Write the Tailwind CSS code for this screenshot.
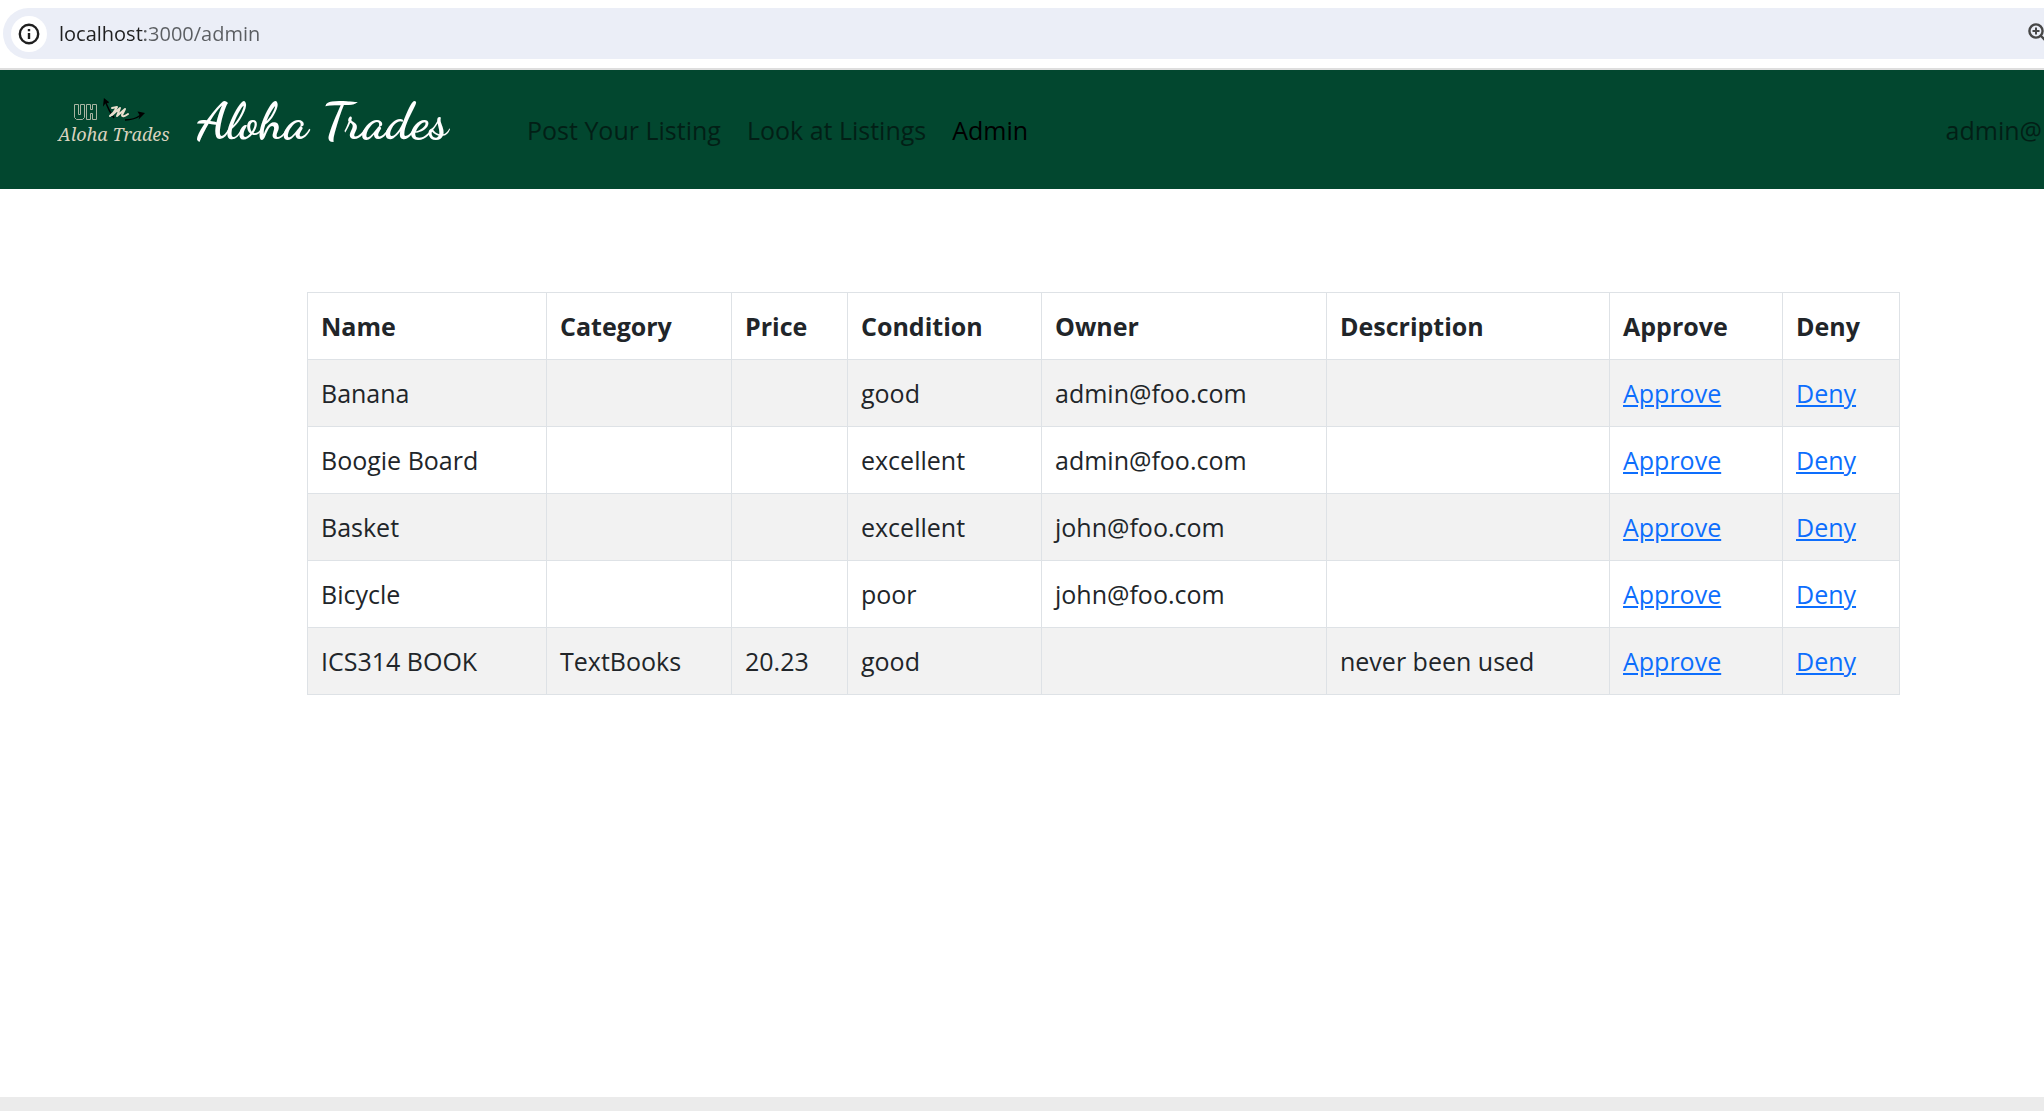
<!DOCTYPE html>
<html lang="en">
<head>
<meta charset="utf-8">
<title>Aloha Trades</title>
<script src="https://cdn.jsdelivr.net/npm/@tailwindcss/browser@4"></script>
</head>
<body class="min-h-screen flex flex-col overflow-x-hidden bg-white font-['Open_Sans','Noto_Sans',sans-serif] text-[25px] leading-10 text-[#212529]">
  <!-- Address bar -->
  <div class="pt-2 pb-[9px] pl-[3px] border-b-2 border-[#dedede]">
    <div class="flex h-[51px] items-center rounded-l-full bg-[#ebeef7] pl-2">
      <button type="button" aria-label="Site information" class="flex size-9 shrink-0 items-center justify-center rounded-full bg-white">
        <svg class="size-[22px]" viewBox="0 0 22 22" fill="none" stroke="#1f1f1f" stroke-width="2.400"><circle cx="11" cy="11" r="9.2"/><path d="M11 10v6M11 6v2.2"/></svg>
      </button>
      <input aria-label="Address" value="localhost:3000/admin" class="ml-3 min-w-0 flex-1 bg-[linear-gradient(90deg,#1f1f1f_86px,#5a5d61_86px)] bg-clip-text text-[20px] leading-8 text-transparent outline-none">
      <button type="button" aria-label="Zoom" class="flex w-4 shrink-0 overflow-hidden">
        <svg class="h-[22px] w-[22px] shrink-0" viewBox="0 0 22 22" fill="none" stroke="#474747" stroke-width="2.4"><circle cx="8" cy="8" r="6.6"/><path d="M13 13l6 6"/><path stroke-width="2" d="M8 4.500v7M4.500 8h7"/></svg>
      </button>
    </div>
  </div>

  <!-- Site navigation -->
  <nav class="flex h-[119px] items-start bg-[#02472f] pl-[57px]">
    <a href="#" aria-label="Aloha Trades home" class="mt-7 shrink-0">
      <svg class="h-[50px] w-[114px]" viewBox="0 0 114 50">
        <g fill="none" stroke="#a9b5a2" stroke-width="1">
          <path d="M17.500 6.500h4v10h2v-10h4v13l-2 2h-6l-2-2zM29.500 6.500h4v5h2v-5h4v15h-4v-6h-2v6h-4z"/>
        </g>
        <g fill="none" stroke="#000" stroke-width="1.500">
          <path d="M57 20Q52 13 48 3M68 22q9 0 16-5"/>
          <path fill="#000" d="M47 6l.500-4.500 4 3-3-.500zM82 14.500l4.500 1-3.500 3.500 .500-2z"/>
        </g>
        <path d="M55 10l5-1-5 8 8-7-3 8 8-7-3 6q0 3 6-1M53 18l3-3" fill="none" stroke="#eadfce" stroke-width="2" stroke-linecap="round" stroke-linejoin="round"/>
        <text x="1" y="43" fill="#d9d2be" font-family="Noto Serif, Liberation Serif, serif" font-style="italic" font-size="18">Aloha Trades</text>
      </svg>
    </a>
    <a href="#" class="ml-[26px] mt-5 w-[260px] shrink-0 whitespace-nowrap font-['Dancing_Script','Liberation_Serif',cursive] text-[52px] leading-[64px] font-bold text-white">Aloha Trades</a>
    <div class="ml-[70px] mt-10 flex flex-1 gap-[26px] whitespace-nowrap pr-[2px] text-[#021f16]">
      <a href="#">Post Your Listing</a>
      <a href="#">Look at Listings</a>
      <a href="#" class="text-black">Admin</a>
      <a href="#" class="ml-auto">admin@</a>
    </div>
  </nav>

  <!-- Listings awaiting review -->
  <main class="flex-1 pt-[103px] pr-[144px] pl-[307px]">
    <table class="w-full table-fixed border-collapse text-left [&_a]:text-[#0d6efd] [&_a]:underline [&_td]:border [&_td]:border-[#dee2e6] [&_td]:px-[13px] [&_td]:pt-[13px] [&_td]:pb-[13px] [&_th]:border [&_th]:border-[#dee2e6] [&_th]:px-[13px] [&_th]:pt-[13px] [&_th]:pb-[13px]">
      <colgroup><col class="w-[239px]"><col class="w-[185px]"><col class="w-[116px]"><col class="w-[194px]"><col class="w-[285px]"><col class="w-[283px]"><col class="w-[173px]"><col class="w-[117px]"></colgroup>
      <thead><tr><th>Name</th><th>Category</th><th>Price</th><th>Condition</th><th>Owner</th><th>Description</th><th>Approve</th><th>Deny</th></tr></thead>
      <tbody>
        <tr class="odd:bg-[#f2f2f2]"><td>Banana</td><td></td><td></td><td>good</td><td>admin@foo.com</td><td></td><td><a href="#">Approve</a></td><td><a href="#">Deny</a></td></tr>
        <tr class="odd:bg-[#f2f2f2]"><td>Boogie Board</td><td></td><td></td><td>excellent</td><td>admin@foo.com</td><td></td><td><a href="#">Approve</a></td><td><a href="#">Deny</a></td></tr>
        <tr class="odd:bg-[#f2f2f2]"><td>Basket</td><td></td><td></td><td>excellent</td><td>john@foo.com</td><td></td><td><a href="#">Approve</a></td><td><a href="#">Deny</a></td></tr>
        <tr class="odd:bg-[#f2f2f2]"><td>Bicycle</td><td></td><td></td><td>poor</td><td>john@foo.com</td><td></td><td><a href="#">Approve</a></td><td><a href="#">Deny</a></td></tr>
        <tr class="odd:bg-[#f2f2f2]"><td>ICS314 BOOK</td><td>TextBooks</td><td>20.23</td><td>good</td><td></td><td>never been used</td><td><a href="#">Approve</a></td><td><a href="#">Deny</a></td></tr>
      </tbody>
    </table>
  </main>
  <footer class="h-[14px] bg-[#ebebeb]"></footer>
</body>
</html>
